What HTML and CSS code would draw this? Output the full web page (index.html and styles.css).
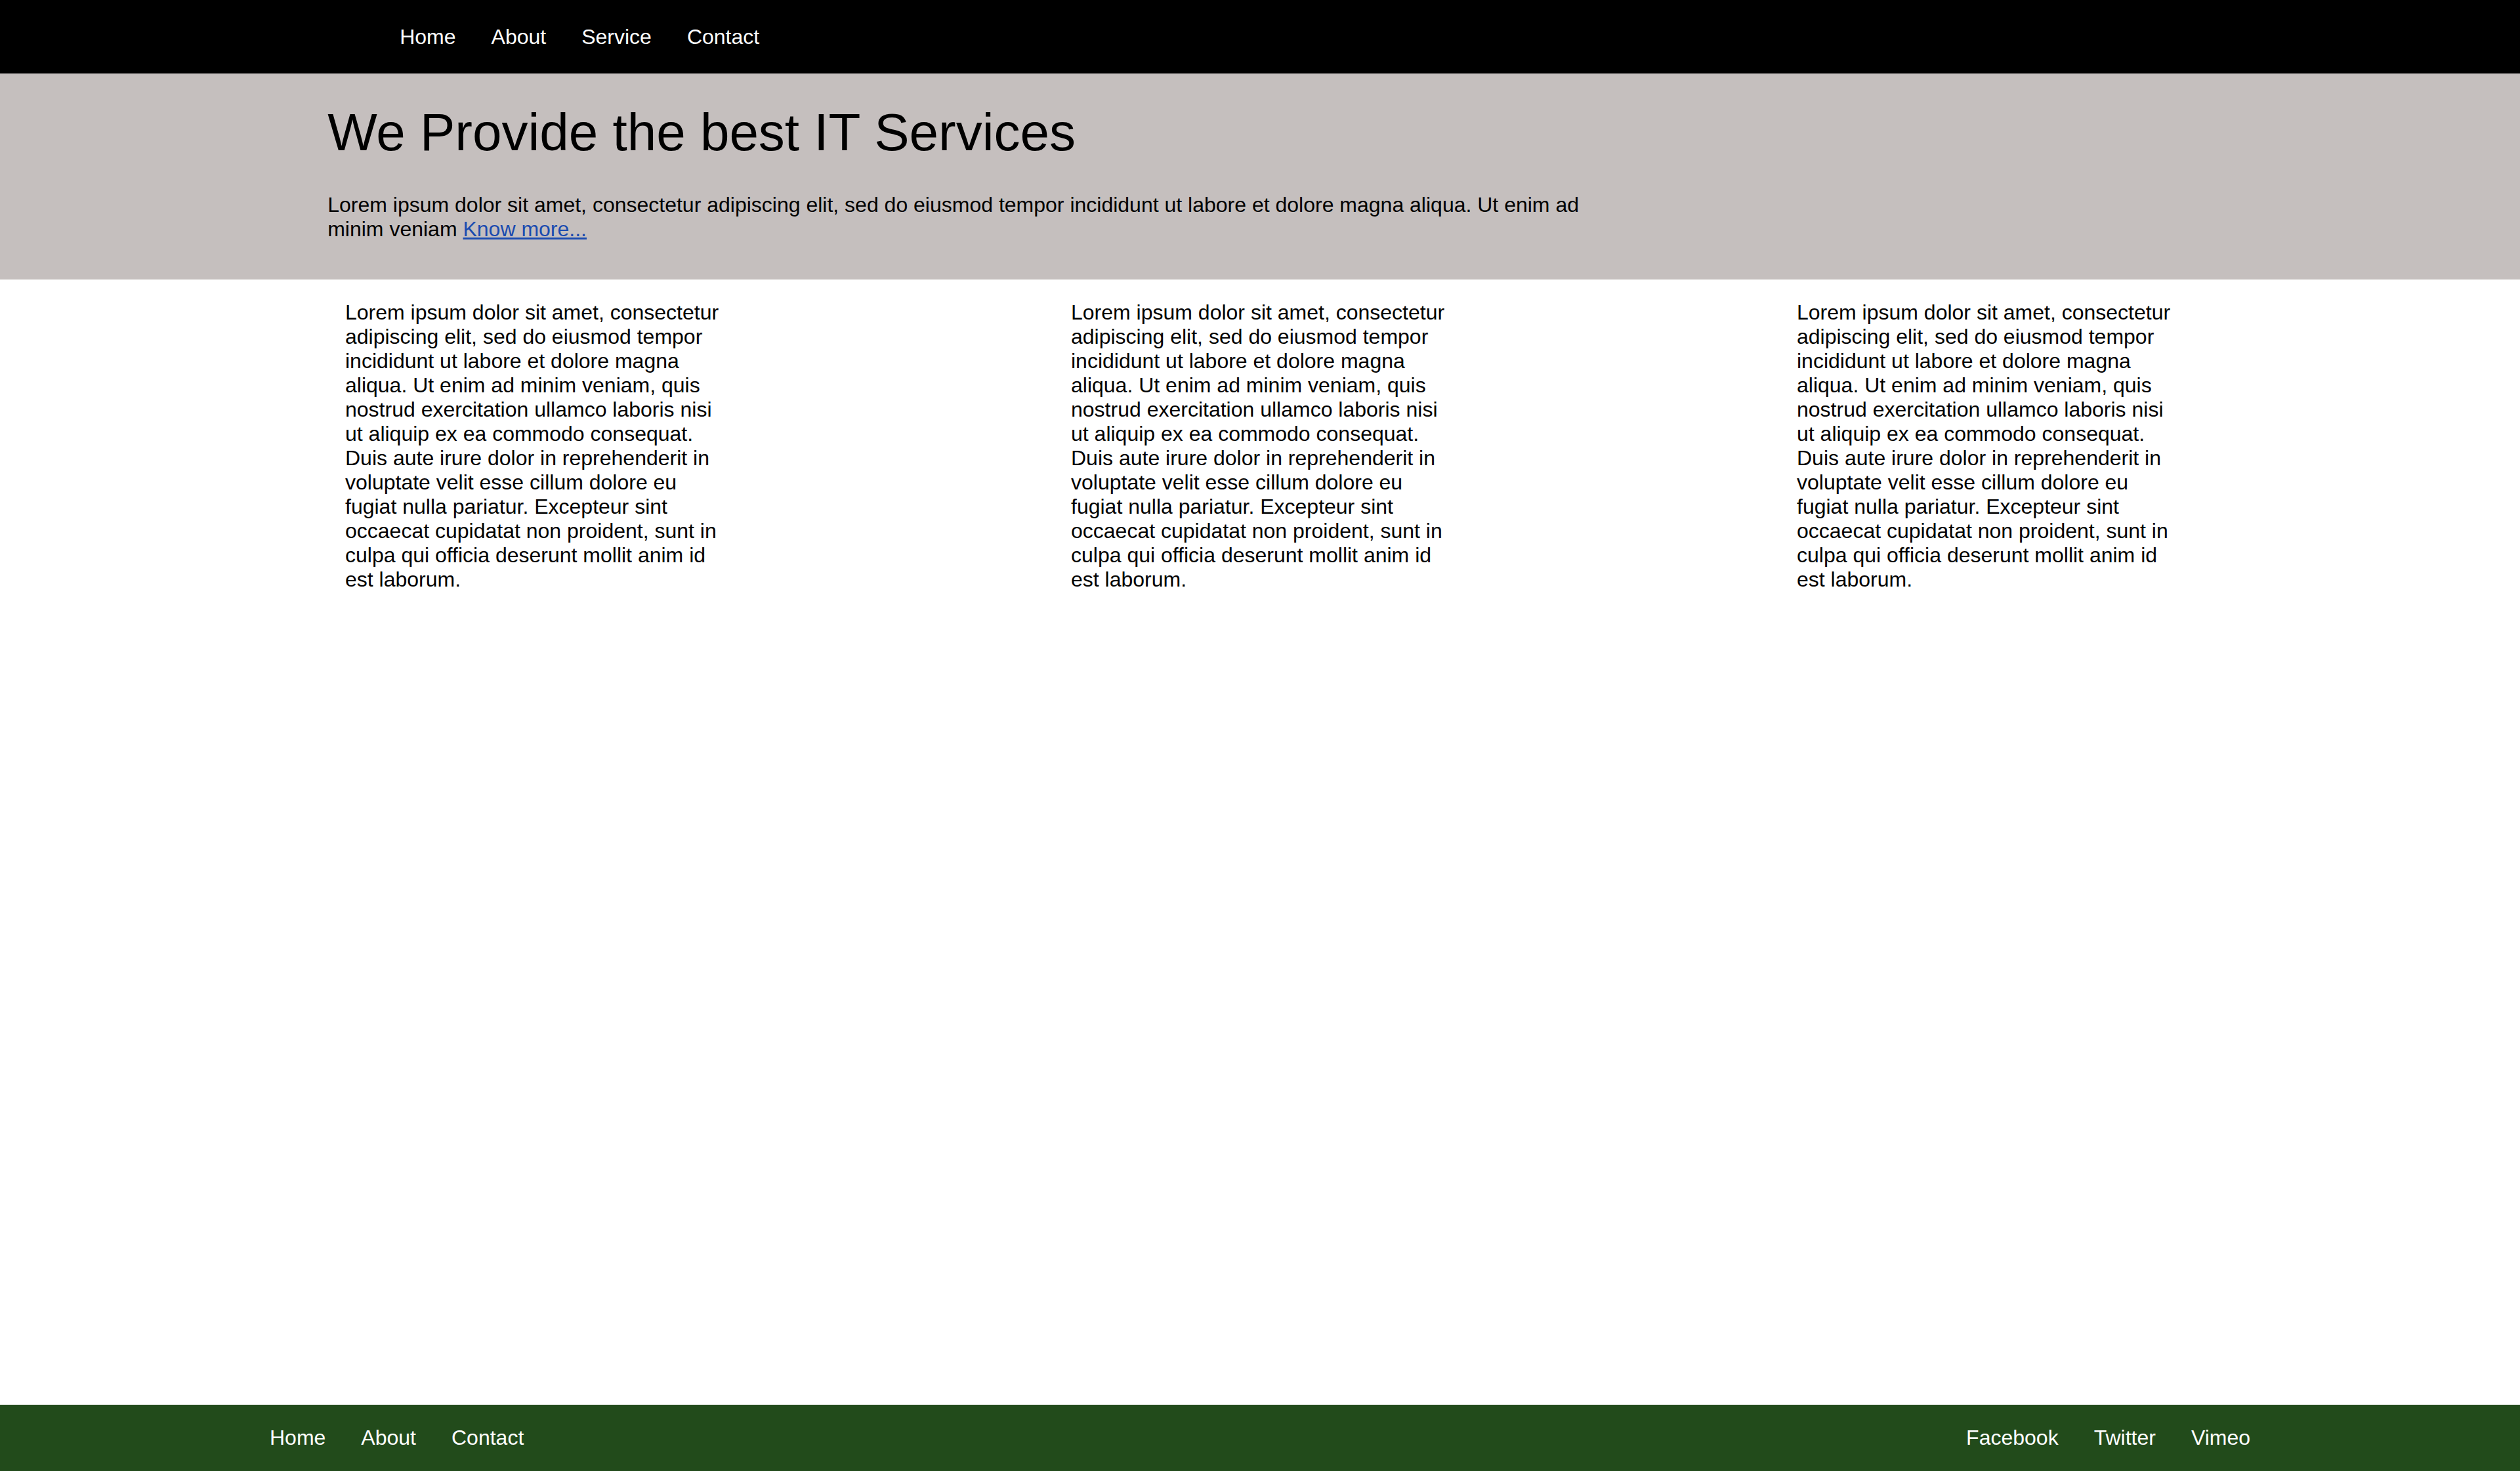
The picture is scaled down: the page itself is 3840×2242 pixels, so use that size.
FILE: index.html
```html
<!DOCTYPE html>
<html lang="en">
<head>
<meta charset="utf-8">
<title>IT Services</title>
<link rel="stylesheet" href="styles.css">
</head>
<body>
<header class="topbar">
<nav class="menu main-menu"><a href="#">Home</a><a href="#">About</a><a href="#">Service</a><a href="#">Contact</a></nav>
</header>
<section class="hero">
<h1>We Provide the best IT Services</h1>
<p>Lorem ipsum dolor sit amet, consectetur adipiscing elit, sed do eiusmod tempor incididunt ut labore et dolore magna aliqua. Ut enim ad minim veniam <a href="#">Know more...</a></p>
</section>
<main class="columns">
<p>Lorem ipsum dolor sit amet, consectetur adipiscing elit, sed do eiusmod tempor incididunt ut labore et dolore magna aliqua. Ut enim ad minim veniam, quis nostrud exercitation ullamco laboris nisi ut aliquip ex ea commodo consequat. Duis aute irure dolor in reprehenderit in voluptate velit esse cillum dolore eu fugiat nulla pariatur. Excepteur sint occaecat cupidatat non proident, sunt in culpa qui officia deserunt mollit anim id est laborum.</p>
<p>Lorem ipsum dolor sit amet, consectetur adipiscing elit, sed do eiusmod tempor incididunt ut labore et dolore magna aliqua. Ut enim ad minim veniam, quis nostrud exercitation ullamco laboris nisi ut aliquip ex ea commodo consequat. Duis aute irure dolor in reprehenderit in voluptate velit esse cillum dolore eu fugiat nulla pariatur. Excepteur sint occaecat cupidatat non proident, sunt in culpa qui officia deserunt mollit anim id est laborum.</p>
<p>Lorem ipsum dolor sit amet, consectetur adipiscing elit, sed do eiusmod tempor incididunt ut labore et dolore magna aliqua. Ut enim ad minim veniam, quis nostrud exercitation ullamco laboris nisi ut aliquip ex ea commodo consequat. Duis aute irure dolor in reprehenderit in voluptate velit esse cillum dolore eu fugiat nulla pariatur. Excepteur sint occaecat cupidatat non proident, sunt in culpa qui officia deserunt mollit anim id est laborum.</p>
</main>
<footer class="footer">
<nav class="menu"><a href="#">Home</a><a href="#">About</a><a href="#">Contact</a></nav>
<nav class="menu"><a href="#">Facebook</a><a href="#">Twitter</a><a href="#">Vimeo</a></nav>
</footer>
</body>
</html>
```

FILE: styles.css
```css
* {
  box-sizing: border-box;
}

body {
  display: flex;
  flex-direction: column;
  min-height: 100vh;
  margin: 0;
  background: #fff;
  color: #000;
  font: 32px/37px "Liberation Sans", Arial, sans-serif;
}

h1,
p {
  margin: 0;
}

.menu {
  display: flex;
  gap: 54px;
}

.menu a {
  color: #fff;
  text-decoration: none;
}

.topbar {
  padding: 38px 13% 37px;
  background: #000;
}

.main-menu {
  padding-left: 110px;
}

.hero {
  padding: 44px 13% 58px;
  background: #c5bfbe;
}

.hero h1 {
  margin-bottom: 46px;
  font-size: 80px;
  font-weight: 400;
  line-height: 92px;
}

.hero p {
  width: 68%;
}

.hero a {
  color: #1a4bb0;
}

.columns {
  display: grid;
  grid-template-columns: repeat(3, 580px);
  justify-content: space-between;
  flex: 1;
  padding: 32px 522px 32px 526px;
}

.footer {
  display: flex;
  justify-content: space-between;
  padding: 32px 411px;
  background: #224b1b;
}
```
